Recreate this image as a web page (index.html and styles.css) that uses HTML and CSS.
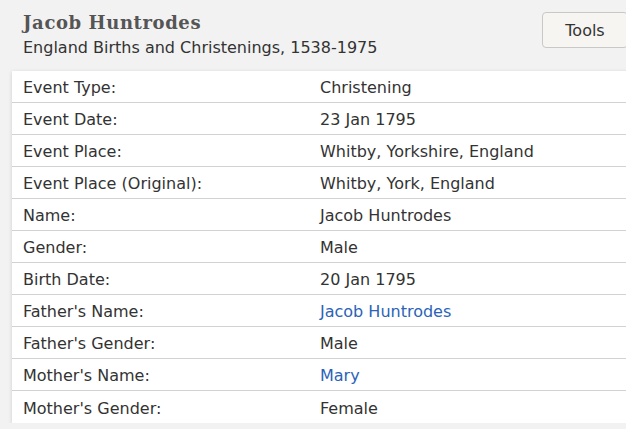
FILE: index.html
```html
<!DOCTYPE html>
<html>
<head>
<meta charset="utf-8">
<link rel="stylesheet" href="styles.css">
</head>
<body>
<div class="page">
  <header class="head">
    <div class="titles">
      <h1 class="title">Jacob Huntrodes</h1>
      <div class="subtitle">England Births and Christenings, 1538-1975</div>
    </div>
    <button class="tools">Tools</button>
  </header>
  <div class="card">
    <div class="row"><div class="label">Event Type:</div><div class="value">Christening</div></div>
    <div class="row"><div class="label">Event Date:</div><div class="value">23 Jan 1795</div></div>
    <div class="row"><div class="label">Event Place:</div><div class="value">Whitby, Yorkshire, England</div></div>
    <div class="row"><div class="label">Event Place (Original):</div><div class="value">Whitby, York, England</div></div>
    <div class="row"><div class="label">Name:</div><div class="value">Jacob Huntrodes</div></div>
    <div class="row"><div class="label">Gender:</div><div class="value">Male</div></div>
    <div class="row"><div class="label">Birth Date:</div><div class="value">20 Jan 1795</div></div>
    <div class="row"><div class="label">Father's Name:</div><div class="value"><a class="link" href="#">Jacob Huntrodes</a></div></div>
    <div class="row"><div class="label">Father's Gender:</div><div class="value">Male</div></div>
    <div class="row"><div class="label">Mother's Name:</div><div class="value"><a class="link" href="#">Mary</a></div></div>
    <div class="row"><div class="label">Mother's Gender:</div><div class="value">Female</div></div>
  </div>
</div>
</body>
</html>
```
FILE: styles.css
```css
html, body {
  margin: 0;
  padding: 0;
  background: #f2f2f2;
  overflow: hidden;
}
.page {
  padding: 12px 0 0 12px;
  font-family: "DejaVu Sans", Verdana, sans-serif;
  color: #333;
}
.head {
  display: flex;
  justify-content: space-between;
  align-items: flex-start;
  height: 59px;
  margin-right: -2px;
}
.titles {
  padding-left: 11px;
}
.title {
  margin: 0;
  font-family: "DejaVu Serif", serif;
  font-weight: bold;
  font-size: 18px;
  line-height: 22px;
  color: #555;
  letter-spacing: 0.6px;
}
.subtitle {
  font-size: 16px;
  line-height: 27px;
  color: #333;
}
.tools {
  width: 86px;
  height: 36px;
  border: 1px solid #c8c8c8;
  border-radius: 4px;
  background: #f6f5f1;
  font-family: "DejaVu Sans", sans-serif;
  font-size: 16px;
  color: #333;
}
.card {
  background: #fff;
  margin-right: -10px;
  box-shadow: 0 1px 4px rgba(0,0,0,0.15);
}
.row {
  display: flex;
  box-sizing: border-box;
  height: 32px;
  padding-top: 2px;
  align-items: center;
  border-bottom: 1px solid #d2d2d2;
  font-size: 16px;
}
.row:last-child {
  border-bottom: none;
}
.label {
  width: 297px;
  padding-left: 11px;
}
.link {
  color: #2a63b8;
  text-decoration: none;
}
```
